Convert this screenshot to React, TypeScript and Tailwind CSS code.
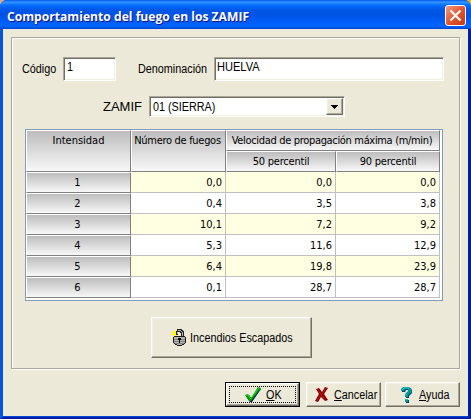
import React from "react";

type Row = { level: number; fires: string; p50: string; p90: string };

const rows: Row[] = [
  { level: 1, fires: "0,0", p50: "0,0", p90: "0,0" },
  { level: 2, fires: "0,4", p50: "3,5", p90: "3,8" },
  { level: 3, fires: "10,1", p50: "7,2", p90: "9,2" },
  { level: 4, fires: "5,3", p50: "11,6", p90: "12,9" },
  { level: 5, fires: "6,4", p50: "19,8", p90: "23,9" },
  { level: 6, fires: "0,1", p50: "28,7", p90: "28,7" },
];

const sunken =
  "border border-t-[#aca899] border-l-[#aca899] border-r-white border-b-white bg-white shadow-[inset_1px_1px_0_#716f64,inset_-1px_-1px_0_#f1efe2]";
const raised =
  "border border-t-white border-l-white border-r-[#716f64] border-b-[#716f64] bg-[#ece9d8] shadow-[inset_-1px_-1px_0_#aca899,inset_1px_1px_0_#f1efe2]";
const head =
  "border-t border-l border-r border-b border-t-white border-l-white border-r-[#808080] border-b-[#808080] bg-linear-to-b from-[#bdbdbd] to-[#f8f8f8] text-center whitespace-nowrap";
const narrow = "inline-block origin-left scale-x-[0.9] whitespace-nowrap";

function Lock() {
  return (
    <svg className="shrink-0" width="15" height="17" viewBox="0 0 15 17" shapeRendering="crispEdges">
      <path d="M3 1h1v3H3zM0 5h4v1H0zM1 2h1v1h1v1h1v1H2V4H1zM1 9h1V8h1V7h1V6h2v1H4v1H3v1H2v1H1zM4 3h2v3H4z" fill="#ffff00" />
      <path d="M6 0h5v1h1v1h1v6h-3V4H9V3H7v3H5V2h1z" fill="#202020" />
      <path d="M7 1h3v1h1v1h1v4h-1V3h-1V2H7zM6 3h1v2H6z" fill="#b8b8b8" />
      <path d="M3 7h11v1h1v6h-1v1h-1v1h-2v1H6v-1H4v-1H3v-1H2V8h1z" fill="#181818" />
      <path d="M3 8h11v6h-1v1h-2v1H6v-1H4v-1H3z" fill="#b4b4b4" />
      <path d="M3 10h11v1H3zM3 12h11v1H3zM4 14h9v1H4z" fill="#808080" />
      <path d="M7 9h3v2H9v3H8v-3H7z" fill="#000" />
    </svg>
  );
}

function Check() {
  return (
    <svg className="shrink-0" width="17" height="16" viewBox="0 0 17 16">
      <path d="M1 9l3-1 2 3 8-10 2 1L7 15H5z" fill="#001a60" />
      <path d="M0 8l3-1 3 4 7-11 3 1L6 14H4z" fill="#009a00" />
      <path d="M1 8h2l2.500 4L14 1" stroke="#22dd22" fill="none" />
    </svg>
  );
}

function Cross() {
  return (
    <svg className="shrink-0" width="13" height="15" viewBox="0 0 13 15">
      <path d="M1 2l3-1 3 4 3-5 3 1-4 6 4 6-3 1-4-4-3 5-3-1 4-7z" fill="#860000" />
      <path d="M2 2l3 4 5 6M11 1L7 7l-5 6" stroke="#cc1010" fill="none" />
    </svg>
  );
}

function Question() {
  return (
    <svg className="shrink-0" width="12" height="16" viewBox="0 0 12 16">
      <path d="M1 5V3l2-2h6l2 2v3L8 9v2H5V8l3-3V3H5L4 5zM5 13h3v3H5z" fill="#004070" />
      <path d="M0 4V2l2-2h6l2.500 2v3L7 8v2H4V7l3-3V2H4L3 4zM4 12h3v3H4z" fill="#009898" />
      <path d="M1 3l2-2h5M5 8v-1M4.500 12.500h2" stroke="#30d0d0" fill="none" />
    </svg>
  );
}

function Cell({ children, odd }: { children: React.ReactNode; odd: boolean }) {
  return (
    <div className={`border-r border-b border-[#c0c0c0] pt-px pr-[3px] text-right leading-[20px] ${odd ? "bg-[#ffffe1]" : "bg-white"}`}>
      {children}
    </div>
  );
}

export default function App() {
  return (
    <div className="h-[419px] w-[471px] overflow-hidden bg-linear-to-r from-[#d8a890] to-[#e0b820] font-['Liberation_Sans',sans-serif] text-[12px] text-black">
      <div className="flex h-full flex-col rounded-t-[7px] bg-[#0831d9]">
        <header className="flex h-[29px] shrink-0 items-center justify-between rounded-t-[7px] bg-[linear-gradient(180deg,#0058ee_0%,#3593ff_7%,#288eff_10%,#127dff_14%,#0369fc_20%,#0057e5_34%,#0054e3_50%,#005bf5_72%,#0066ff_90%,#0050dd_97%,#003dd7_100%)] pr-[5px] pl-[7px]">
          <h1 className="mt-[3px] origin-left scale-x-[0.932] font-['Open_Sans',sans-serif] text-[13px] leading-[20px] font-bold whitespace-nowrap text-white [text-shadow:1px_1px_0_#0f1089]">
            Comportamiento del fuego en los ZAMIF
          </h1>
          <button className="mt-[2px] flex h-[21px] w-[21px] items-center justify-center rounded-[3px] border border-white bg-linear-to-br from-[#f09a80] via-[#e3552f] to-[#c23a12]">
            <svg width="13" height="13" viewBox="0 0 13 13">
              <path d="M1.500 1.500l10 10M11.500 1.500l-10 10" stroke="#fff" strokeWidth="2.2" />
            </svg>
          </button>
        </header>
        <main className="flex flex-1 flex-col border-x-[3px] border-b-2 border-l-[#0855dd] border-r-[#001ea0] border-b-[#001ea0] bg-[#ece9d8] px-2 pt-2 shadow-[inset_0_-1px_0_#0046e0]">
          <fieldset className="h-[332px] w-[449px] border border-[#aca899] pt-[19px] shadow-[inset_1px_1px_0_#fff,1px_1px_0_#fff]">
            <div className="flex h-6 items-center pl-[10px]">
              <label className="w-[41px]"><span className={narrow}>Código</span></label>
              <div className={`h-6 w-[53px] pl-[3px] leading-[19px] ${sunken}`}><span className={narrow}>1</span></div>
              <label className="ml-[22px] w-[76px]"><span className={narrow}>Denominación</span></label>
              <div className={`h-6 w-[230px] pl-[2px] leading-[19px] ${sunken}`}>
                <span className="inline-block origin-left scale-x-[0.92]">HUELVA</span>
              </div>
            </div>
            <div className="mt-[15px] flex h-[21px] items-center pl-[91px]">
              <label className="w-[46px] text-[13px]">ZAMIF</label>
              <div className={`flex h-[21px] w-[196px] items-center justify-between pr-px pl-[3px] ${sunken}`}>
                <span className={narrow}>01 (SIERRA)</span>
                <span className={`flex h-[17px] w-[17px] items-center justify-center ${raised}`}>
                  <svg width="7" height="4" shapeRendering="crispEdges"><path d="M0 0h7v1H6v1H5v1H4v1H3V3H2V2H1V1H0z" /></svg>
                </span>
              </div>
            </div>
            <section className="mt-3 ml-[13px] h-[172px] w-[418px] border border-[#7f9db9] bg-white font-['DejaVu_Sans_Condensed','DejaVu_Sans',sans-serif] text-[11px]">
              <div className="grid grid-cols-[105px_95px_110px_104px] grid-rows-[repeat(8,21px)]">
                <div className={`row-span-2 leading-[19px] ${head}`}>Intensidad</div>
                <div className={`row-span-2 pr-[2px] leading-[19px] tracking-[-0.3px] ${head}`}>Número de fuegos</div>
                <div className={`col-span-2 pr-[2px] leading-[19px] tracking-[-0.33px] ${head}`}>Velocidad de propagación máxima (m/min)</div>
                <div className={`leading-[19px] tracking-[-0.2px] ${head}`}>50 percentil</div>
                <div className={`leading-[19px] tracking-[-0.2px] ${head}`}>90 percentil</div>
                {rows.map((r) => (
                  <React.Fragment key={r.level}>
                    <div className={`pr-[2px] leading-[20px] ${head}`}>{r.level}</div>
                    <Cell odd={r.level % 2 === 1}>{r.fires}</Cell>
                    <Cell odd={r.level % 2 === 1}>{r.p50}</Cell>
                    <Cell odd={r.level % 2 === 1}>{r.p90}</Cell>
                  </React.Fragment>
                ))}
              </div>
            </section>
            <button className={`mt-4 ml-[139px] flex h-[41px] w-[161px] items-center gap-[4px] pl-[19px] ${raised}`}>
              <Lock />
              <span className={narrow}>Incendios Escapados</span>
            </button>
          </fieldset>
          <footer className="mt-[13px] flex justify-end">
            <div className="h-[25px] w-[75px] border border-black">
              <button className={`flex h-full w-full items-center p-[2px] ${raised}`}>
                <span className="flex h-full w-full items-center gap-1 border border-dotted border-black pl-[15px]">
                  <Check />
                  <span className={narrow}><u>O</u>K</span>
                </span>
              </button>
            </div>
            <button className={`ml-[6px] flex h-[25px] w-[75px] items-center gap-[6px] pl-[8px] ${raised}`}>
              <Cross />
              <span className={narrow}><u>C</u>ancelar</span>
            </button>
            <button className={`ml-1 flex h-[25px] w-[75px] items-center gap-[6px] pl-[15px] ${raised}`}>
              <Question />
              <span className={narrow}><u>A</u>yuda</span>
            </button>
          </footer>
        </main>
      </div>
    </div>
  );
}
